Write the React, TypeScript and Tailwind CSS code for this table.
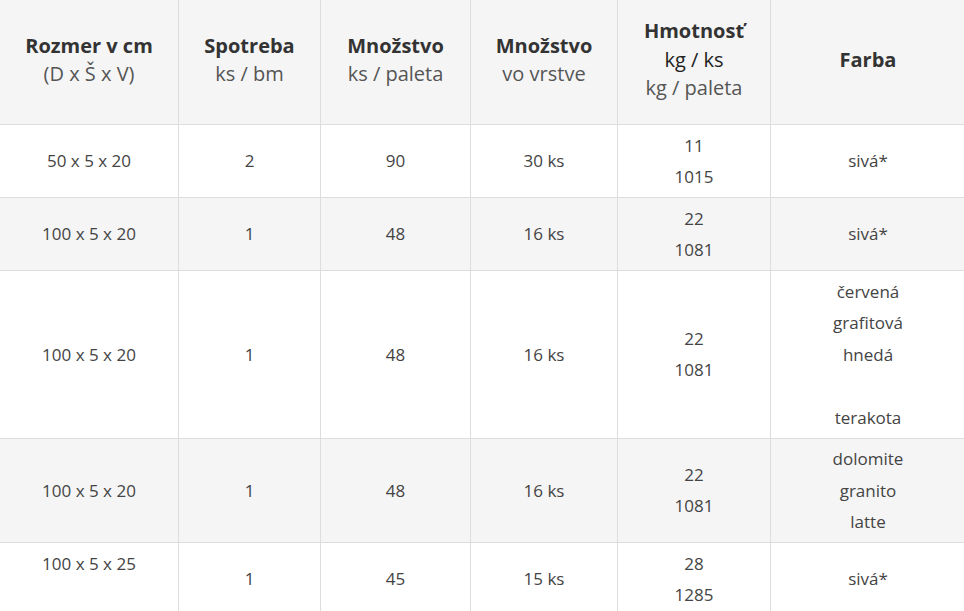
import React from "react";

type Row = {
  size: string[];
  use: string;
  perPallet: string;
  perLayer: string;
  weight: string[];
  colors: string[];
};

const rows: Row[] = [
  { size: ["50 x 5 x 20"], use: "2", perPallet: "90", perLayer: "30 ks", weight: ["11", "1015"], colors: ["sivá*"] },
  { size: ["100 x 5 x 20"], use: "1", perPallet: "48", perLayer: "16 ks", weight: ["22", "1081"], colors: ["sivá*"] },
  {
    size: ["100 x 5 x 20"],
    use: "1",
    perPallet: "48",
    perLayer: "16 ks",
    weight: ["22", "1081"],
    colors: ["červená", "grafitová", "hnedá", "", "terakota"],
  },
  {
    size: ["100 x 5 x 20"],
    use: "1",
    perPallet: "48",
    perLayer: "16 ks",
    weight: ["22", "1081"],
    colors: ["dolomite", "granito", "latte"],
  },
  { size: ["100 x 5 x 25", ""], use: "1", perPallet: "45", perLayer: "15 ks", weight: ["28", "1285"], colors: ["sivá*"] },
];

const Lines = ({ items }: { items: string[] }) => (
  <>
    {items.map((t, i) => (
      <div key={i} className="h-[31.5px]">
        {t}
      </div>
    ))}
  </>
);

const Head = ({ title, sub }: { title: string; sub?: React.ReactNode }) => (
  <th className="border border-[#dddddd] px-2 pb-1 align-middle font-normal">
    <div className="font-bold text-[#333333]">{title}</div>
    {sub}
  </th>
);

export default function App() {
  return (
    <div className="w-[964px] h-[611px] overflow-hidden bg-white font-['Open_Sans',sans-serif]">
      <table className="w-[966px] -ml-px -mt-px table-fixed border-collapse text-center">
        <colgroup>
          <col className="w-[179px]" />
          <col className="w-[142px]" />
          <col className="w-[150px]" />
          <col className="w-[147px]" />
          <col className="w-[153px]" />
          <col className="w-[195px]" />
        </colgroup>
        <thead>
          <tr className="h-[125px] bg-[#f5f5f5] text-[20px] leading-[28.5px]">
            <Head title="Rozmer v cm" sub={<div className="-mt-px text-[#555555]">(D x Š x V)</div>} />
            <Head title="Spotreba" sub={<div className="text-[#555555]">ks / bm</div>} />
            <Head title="Množstvo" sub={<div className="text-[#555555]">ks / paleta</div>} />
            <Head title="Množstvo" sub={<div className="text-[#555555]">vo vrstve</div>} />
            <Head
              title="Hmotnosť"
              sub={
                <>
                  <div className="text-[#222222]">kg / ks</div>
                  <div className="text-[#555555]">kg / paleta</div>
                </>
              }
            />
            <Head title="Farba" />
          </tr>
        </thead>
        <tbody className="text-[17px] leading-[31.5px] text-[#444444]">
          {rows.map((r, i) => (
            <tr key={i} className={i % 2 === 1 ? "bg-[#f5f5f5]" : "bg-white"}>
              <td className="border border-[#dddddd] px-2 py-[4.5px] align-middle">
                <Lines items={r.size} />
              </td>
              <td className="border border-[#dddddd] px-2 py-[4.5px] align-middle">{r.use}</td>
              <td className="border border-[#dddddd] px-2 py-[4.5px] align-middle">{r.perPallet}</td>
              <td className="border border-[#dddddd] px-2 py-[4.5px] align-middle">{r.perLayer}</td>
              <td className="border border-[#dddddd] px-2 py-[4.5px] align-middle">
                <Lines items={r.weight} />
              </td>
              <td className="border border-[#dddddd] px-2 py-[4.5px] align-middle">
                <Lines items={r.colors} />
              </td>
            </tr>
          ))}
        </tbody>
      </table>
    </div>
  );
}
